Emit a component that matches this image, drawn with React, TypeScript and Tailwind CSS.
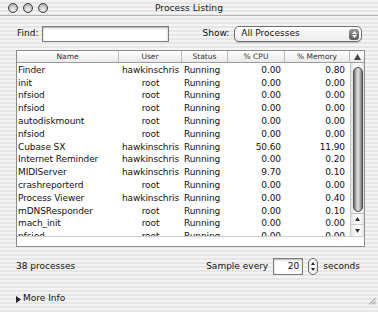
import React from "react";

const rows: string[][] = [
  ["Finder", "hawkinschris", "Running", "0.00", "0.80"],
  ["init", "root", "Running", "0.00", "0.00"],
  ["nfsiod", "root", "Running", "0.00", "0.00"],
  ["nfsiod", "root", "Running", "0.00", "0.00"],
  ["autodiskmount", "root", "Running", "0.00", "0.00"],
  ["nfsiod", "root", "Running", "0.00", "0.00"],
  ["Cubase SX", "hawkinschris", "Running", "50.60", "11.90"],
  ["Internet Reminder", "hawkinschris", "Running", "0.00", "0.20"],
  ["MIDIServer", "hawkinschris", "Running", "9.70", "0.10"],
  ["crashreporterd", "root", "Running", "0.00", "0.00"],
  ["Process Viewer", "hawkinschris", "Running", "0.00", "0.40"],
  ["mDNSResponder", "root", "Running", "0.00", "0.10"],
  ["mach_init", "root", "Running", "0.00", "0.00"],
  ["nfsiod", "root", "Running", "0.00", "0.00"],
];

function Light() {
  return (
    <div className="w-[10px] h-[10px] rounded-full border-[1.5px] border-[#3a3a3a] bg-[radial-gradient(circle_at_50%_70%,#f4f4f4,#b8b8b8_70%,#8a8a8a)]" />
  );
}

export default function App() {
  return (
    <div className="w-[378px] h-[312px] overflow-hidden flex flex-col font-['DejaVu_Sans',sans-serif] text-[#111] bg-[repeating-linear-gradient(180deg,#f4f4f4_0px,#f4f4f4_2px,#e6e6e6_2px,#e6e6e6_4px)]">
      {/* Title bar */}
      <div className="h-[16px] flex items-center border-b border-[#b4b4b4]">
        <div className="w-[60px] flex items-center gap-[5px] pl-[8px]">
          <Light />
          <Light />
          <Light />
        </div>
        <div className="flex-1 text-center text-[9.2px] leading-none text-[#222]">Process Listing</div>
        <div className="w-[60px]" />
      </div>

      {/* Find / Show row */}
      <div className="mt-[10px] h-[16px] flex items-center pl-[17px] text-[9px]">
        <span>Find:</span>
        <div className="ml-[4px] w-[127px] h-[16px] border border-[#7c7c7c] bg-white shadow-[inset_0_1px_2px_rgba(0,0,0,0.35)]" />
        <span className="ml-[33px]">Show:</span>
        <div className="ml-[5px] w-[128px] h-[16px] rounded-[5px] border border-[#6e6e6e] bg-[linear-gradient(180deg,#ffffff,#ececec)] flex items-center pl-[6px] pr-[2px] shadow-[0_1px_1px_rgba(0,0,0,0.2)]">
          <span className="flex-1">All Processes</span>
          <div className="w-[10px] h-[11px] rounded-[3px] bg-[linear-gradient(180deg,#9a9a9a,#5a5a5a)] flex flex-col items-center justify-center gap-[1px]">
            <svg width="5" height="3" viewBox="0 0 5 3"><path d="M0 3 L2.5 0 L5 3 Z" fill="#fff" /></svg>
            <svg width="5" height="3" viewBox="0 0 5 3"><path d="M0 0 L2.5 3 L5 0 Z" fill="#fff" /></svg>
          </div>
        </div>
      </div>

      {/* Table */}
      <div className="mt-[8px] ml-[16px] w-[349px] h-[197px] border border-[#8c8c8c] bg-white flex flex-col">
        <div className="h-[12px] flex border-b border-[#9c9c9c] bg-[linear-gradient(180deg,#ffffff,#e9e9e9)] text-[7.5px] leading-[11px] text-[#333]">
          <div className="w-[102px] text-center border-r border-[#bdbdbd]">Name</div>
          <div className="w-[63px] text-center border-r border-[#bdbdbd]">User</div>
          <div className="w-[46px] text-center border-r border-[#bdbdbd]">Status</div>
          <div className="w-[57px] text-center border-r border-[#bdbdbd]">% CPU</div>
          <div className="w-[65px] text-center border-r border-[#bdbdbd]">% Memory</div>
          <div className="w-[14px] flex items-center justify-center">
            <svg width="7" height="6" viewBox="0 0 7 6"><path d="M0 6 L3.5 0 L7 6 Z" fill="#444" /></svg>
          </div>
        </div>
        <div className="h-[173px] flex overflow-hidden">
          <div className="w-[333px] flex flex-col pt-[1px]">
            {rows.map((r, i) => (
              <div key={i} className="h-[12.8px] shrink-0 flex items-center text-[9px] leading-none tracking-[-0.1px]">
                <div className="w-[102px] pl-[1px] whitespace-nowrap">{r[0]}</div>
                <div className="w-[63px] text-center whitespace-nowrap">{r[1]}</div>
                <div className="w-[46px] pl-[2px]">{r[2]}</div>
                <div className="w-[57px] text-right pr-[4px]">{r[3]}</div>
                <div className="w-[65px] text-right pr-[5px]">{r[4]}</div>
              </div>
            ))}
          </div>
          <div className="w-[14px] border-l border-[#c8c8c8] flex flex-col bg-[linear-gradient(90deg,#e4e4e4,#ffffff_40%,#ffffff_60%,#e4e4e4)]">
            <div className="mt-[4px] ml-[2px] w-[10px] h-[145px] rounded-full border border-[#4e4e4e] bg-[linear-gradient(90deg,#6e6e6e,#bcbcbc_30%,#e2e2e2_50%,#bcbcbc_70%,#6e6e6e)]" />
            <div className="mt-auto flex flex-col border-t border-[#bdbdbd]">
              <div className="h-[11px] flex items-center justify-center border-b border-[#d0d0d0]">
                <svg width="5" height="4" viewBox="0 0 5 4"><path d="M0 4 L2.5 0 L5 4 Z" fill="#333" /></svg>
              </div>
              <div className="h-[11px] flex items-center justify-center">
                <svg width="5" height="4" viewBox="0 0 5 4"><path d="M0 0 L2.5 4 L5 0 Z" fill="#333" /></svg>
              </div>
            </div>
          </div>
        </div>
        <div className="h-[10px] border-t border-[#cfcfcf] bg-white" />
      </div>

      {/* Bottom row */}
      <div className="mt-[11px] h-[17px] flex items-center pl-[16px] pr-[18px] text-[9px]">
        <span>38 processes</span>
        <span className="ml-auto">Sample every</span>
        <div className="ml-[5px] w-[30px] h-[17px] border border-[#7c7c7c] bg-white shadow-[inset_0_1px_2px_rgba(0,0,0,0.3)] flex items-center justify-end pr-[3px]">
          20
        </div>
        <div className="ml-[5px] w-[10px] h-[17px] rounded-full border border-[#6a6a6a] bg-[linear-gradient(90deg,#e6e6e6,#ffffff,#e6e6e6)] flex flex-col items-center justify-center gap-[3px]">
          <svg width="4" height="3" viewBox="0 0 4 3"><path d="M0 3 L2 0 L4 3 Z" fill="#222" /></svg>
          <svg width="4" height="3" viewBox="0 0 4 3"><path d="M0 0 L2 3 L4 0 Z" fill="#222" /></svg>
        </div>
        <span className="ml-[5px]">seconds</span>
      </div>

      {/* More info */}
      <div className="mt-[18px] h-[12px] flex items-center pl-[16px] text-[9px]">
        <svg width="5" height="7" viewBox="0 0 5 7"><path d="M0 0 L5 3.5 L0 7 Z" fill="#222" /></svg>
        <span className="ml-[2px]">More Info</span>
        <svg className="ml-auto mr-[2px] self-end" width="8" height="8" viewBox="0 0 8 8">
          <path d="M7.5 1 L1 7.5 M7.5 4 L4 7.5 M7.5 6.5 L6.5 7.5" stroke="#8a8a8a" strokeWidth="1" />
        </svg>
      </div>
    </div>
  );
}
